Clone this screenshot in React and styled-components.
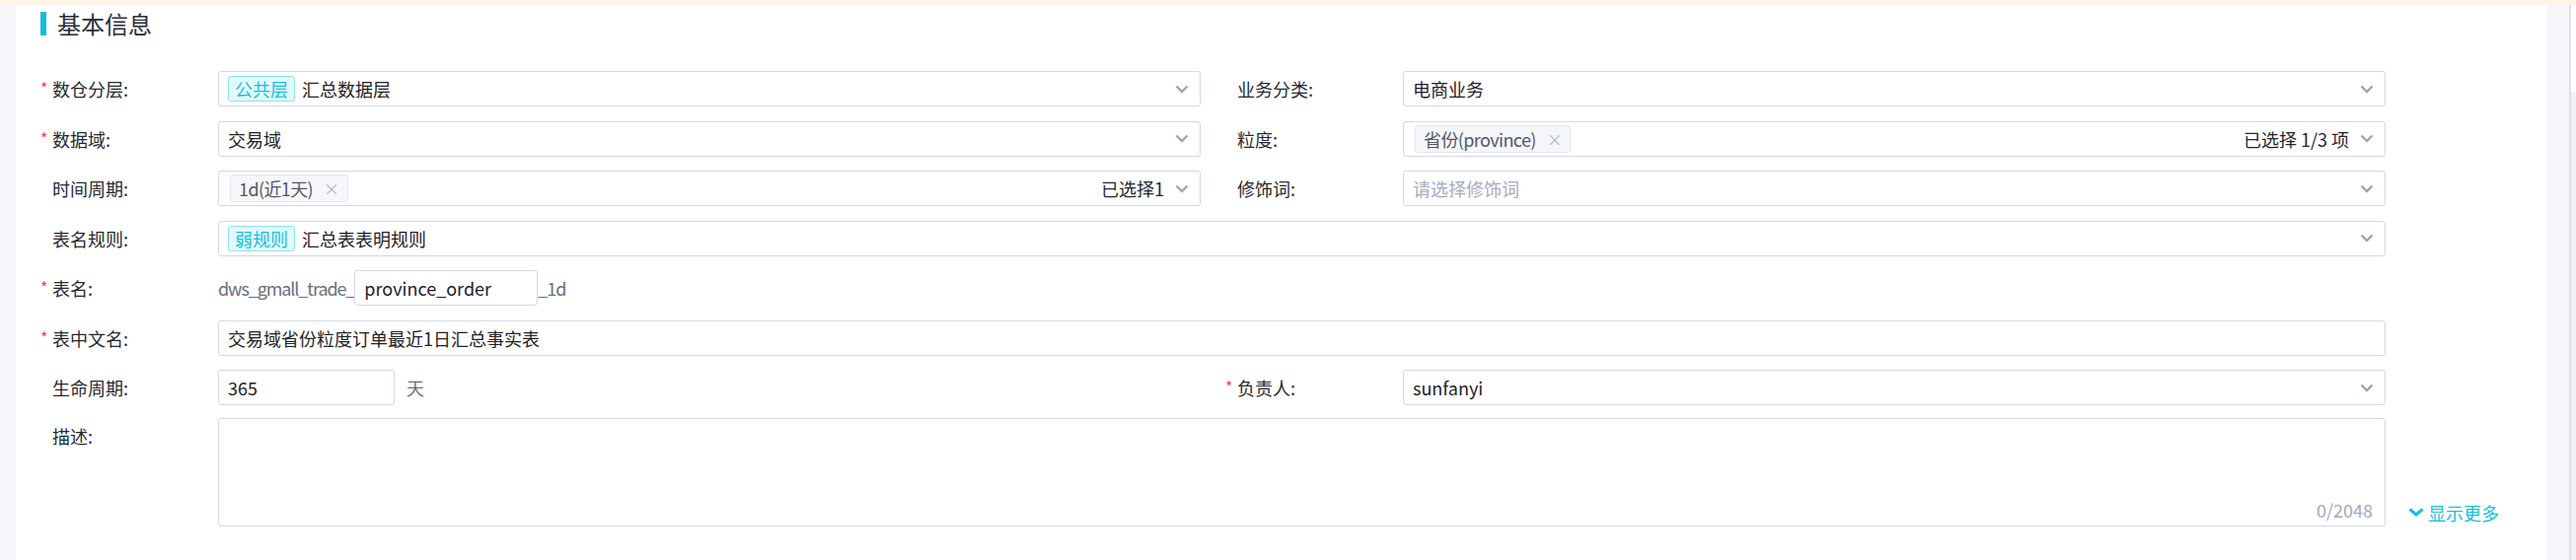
import React from 'react';
import styled, { createGlobalStyle } from 'styled-components';

const GlobalStyle = createGlobalStyle`
  html, body {
    margin: 0;
    padding: 0;
    background: #f5f6fa;
    overflow: hidden;
  }
  * {
    box-sizing: border-box;
  }
`;

const FONT = `"Noto Sans CJK SC", "Microsoft YaHei", "Liberation Sans", sans-serif`;

const Page = styled.div`
  display: flex;
  flex-direction: column;
  width: 2611px;
  height: 568px;
  font-family: ${FONT};
  font-size: 18px;
  color: #23262f;
`;

const TopBand = styled.div`
  height: 5px;
  background: #fef4e6;
  flex-shrink: 0;
`;

const Body = styled.div`
  display: flex;
  flex: 1;
`;

const Gutter = styled.div`
  width: ${p => p.$w}px;
  background: #f5f6fa;
  flex-shrink: 0;
`;

const ScrollRail = styled.div`
  width: 7px;
  border-left: 2px solid #dcdde5;
  background: #f1f2f6;
  display: flex;
  flex-direction: column;
`;

const ScrollThumb = styled.div`
  height: 88px;
  background: #ffffff;
`;

const Card = styled.section`
  flex: 1;
  background: #ffffff;
  padding: 7px 0 0 25px;
`;

const TitleRow = styled.div`
  display: flex;
  align-items: center;
  gap: 11px;
  height: 24px;
`;

const TitleBar = styled.span`
  width: 6px;
  height: 24px;
  background: #10bcd8;
`;

const Title = styled.h2`
  margin: 0;
  font-size: 24px;
  font-weight: 400;
  line-height: 24px;
  color: #2a2d36;
`;

const FormArea = styled.div`
  display: flex;
  margin-top: 36px;
`;

const FormGrid = styled.div`
  width: 2377px;
  display: grid;
  grid-template-columns: 1fr 1fr;
  column-gap: 25px;
  row-gap: 14.5px;
`;

const Field = styled.div`
  display: grid;
  grid-template-columns: 180px 1fr;
  align-items: start;
  grid-column: ${p => (p.$full ? '1 / -1' : 'auto')};
  margin-top: ${p => p.$shift || 0}px;
`;

const Label = styled.label`
  display: flex;
  align-items: center;
  height: 36px;
  line-height: 36px;
  color: #262932;
  white-space: nowrap;
`;

const Star = styled.span`
  display: inline-block;
  width: 12px;
  color: #f5484d;
  font-size: 16px;
  line-height: 36px;
  position: relative;
  top: -1px;
`;

const Select = styled.div`
  display: flex;
  align-items: center;
  height: 36px;
  border: 1px solid #d4d7e5;
  border-radius: 3px;
  padding: 0 11px 0 9px;
  gap: 11px;
  background: #fff;
`;

const SelectValue = styled.div`
  flex: 1;
  display: flex;
  align-items: center;
  gap: 7px;
  min-width: 0;
  color: ${p => (p.$placeholder ? '#a7abc0' : '#1f2229')};
  white-space: nowrap;
`;

const Extra = styled.span`
  color: #23262f;
  white-space: nowrap;
`;

const KindTag = styled.span`
  display: inline-flex;
  align-items: center;
  height: 26px;
  padding: 0 6px;
  border: 1px solid #8fe2ef;
  border-radius: 3px;
  background: #e3f8fb;
  color: #17c0db;
  line-height: 1;
`;

const ChoiceTag = styled.span`
  display: inline-flex;
  align-items: center;
  gap: 11px;
  height: 28px;
  padding: 0 8px;
  margin-left: 2px;
  border: 1px solid #e6e7ef;
  border-radius: 3px;
  background: #f5f6fa;
  color: #545868;
  line-height: 1;
  letter-spacing: -0.6px;
`;

const TagClose = styled.span`
  color: #b4b8c8;
  font-size: 16px;
`;

const Inline = styled.div`
  display: flex;
  align-items: center;
  height: 36px;
`;

const Affix = styled.span`
  color: #6a6e80;
  white-space: nowrap;
  letter-spacing: -1.1px;
`;

const TextBox = styled.div`
  display: flex;
  align-items: center;
  height: 36px;
  width: ${p => (p.$w ? `${p.$w}px` : '100%')};
  border: 1px solid #d4d7e5;
  border-radius: 3px;
  padding: 0 9px;
  color: #1f2229;
  white-space: nowrap;
  background: #fff;
`;

const Unit = styled.span`
  margin-left: 12px;
  color: #6a6e80;
`;

const TextArea = styled.div`
  height: 110px;
  border: 1px solid #d4d7e5;
  border-radius: 3px;
  display: flex;
  align-items: flex-end;
  justify-content: flex-end;
  padding: 0 12px 4px 0;
`;

const Counter = styled.span`
  color: #a4a8bc;
  font-size: 18px;
  line-height: 24px;
`;

const ShowMore = styled.a`
  align-self: flex-end;
  display: flex;
  align-items: center;
  gap: 4px;
  margin: 0 0 3px 23px;
  color: #17bfdb;
  line-height: 22px;
  cursor: pointer;
  white-space: nowrap;
`;

const Chevron = ({ color = '#9ea3ba', w = 14, sw = 2.4 }) => (
  <svg width={w} height="9" viewBox={`0 0 ${w} 9`} style={{ flexShrink: 0 }}>
    <polyline
      points={`1.5,1.5 ${w / 2},7 ${w - 1.5},1.5`}
      fill="none"
      stroke={color}
      strokeWidth={sw}
    />
  </svg>
);

const Req = ({ on }) => <Star>{on ? '*' : ''}</Star>;

const SelectField = ({ label, required, full, children, extra, placeholder }) => (
  <Field $full={full}>
    <Label>
      <Req on={required} />
      {label}
    </Label>
    <Select>
      <SelectValue $placeholder={placeholder}>{children}</SelectValue>
      {extra && <Extra>{extra}</Extra>}
      <Chevron />
    </Select>
  </Field>
);

export default function App() {
  return (
    <>
      <GlobalStyle />
      <Page>
        <TopBand />
        <Body>
          <Gutter $w={16} />
          <Card>
            <TitleRow>
              <TitleBar />
              <Title>基本信息</Title>
            </TitleRow>
            <FormArea>
              <FormGrid>
                <SelectField label="数仓分层:" required>
                  <KindTag>公共层</KindTag>
                  汇总数据层
                </SelectField>
                <SelectField label="业务分类:">电商业务</SelectField>

                <SelectField label="数据域:" required>交易域</SelectField>
                <SelectField label="粒度:" extra="已选择 1/3 项">
                  <ChoiceTag>
                    省份(province)
                    <TagClose>×</TagClose>
                  </ChoiceTag>
                </SelectField>

                <SelectField label="时间周期:" extra="已选择1">
                  <ChoiceTag>
                    1d(近1天)
                    <TagClose>×</TagClose>
                  </ChoiceTag>
                </SelectField>
                <SelectField label="修饰词:" placeholder>请选择修饰词</SelectField>

                <SelectField label="表名规则:" full>
                  <KindTag>弱规则</KindTag>
                  汇总表表明规则
                </SelectField>

                <Field $full>
                  <Label>
                    <Req on />
                    表名:
                  </Label>
                  <Inline>
                    <Affix>dws_gmall_trade_</Affix>
                    <TextBox $w={186}>province_order</TextBox>
                    <Affix>_1d</Affix>
                  </Inline>
                </Field>

                <Field $full>
                  <Label>
                    <Req on />
                    表中文名:
                  </Label>
                  <TextBox>交易域省份粒度订单最近1日汇总事实表</TextBox>
                </Field>

                <Field>
                  <Label>
                    <Req />
                    生命周期:
                  </Label>
                  <Inline>
                    <TextBox $w={179}>365</TextBox>
                    <Unit>天</Unit>
                  </Inline>
                </Field>
                <SelectField label="负责人:" required>sunfanyi</SelectField>

                <Field $full $shift={-2}>
                  <Label>
                    <Req />
                    描述:
                  </Label>
                  <TextArea>
                    <Counter>0/2048</Counter>
                  </TextArea>
                </Field>
              </FormGrid>
              <ShowMore>
                <Chevron color="#17bfdb" w={16} sw={3} />
                显示更多
              </ShowMore>
            </FormArea>
          </Card>
          <Gutter $w={23} />
          <ScrollRail>
            <ScrollThumb />
          </ScrollRail>
        </Body>
      </Page>
    </>
  );
}
